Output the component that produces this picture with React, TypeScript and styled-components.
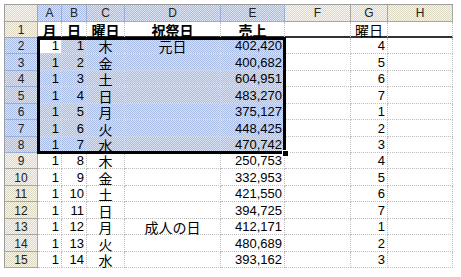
import React from "react";
import styled, { createGlobalStyle, css } from "styled-components";

const GlobalStyle = createGlobalStyle`
  html, body { margin: 0; padding: 0; background: #ffffff; }
  body { font-family: "Liberation Sans", "Noto Sans CJK JP", sans-serif; }
`;

const checker = (a: string, b: string) => css`
  background: repeating-conic-gradient(${a} 0% 25%, ${b} 0% 50%) 0 0 / 2px 2px;
`;

const Page = styled.div`
  padding: 4px 0 0 4px;
`;

const Sheet = styled.div`
  position: relative;
  display: grid;
  width: fit-content;
  grid-template-columns: 33px 24px 25px 38px 96px 64px 66px 37px 65px;
  grid-template-rows: 17px 16px repeat(2, 16px 17px 16px 17px 16px 17px 16px);
  border-top: 1px solid #9c9c9c;
  border-left: 1px solid #9c9c9c;
  font-family: "Liberation Sans", "Noto Sans CJK JP", sans-serif;
`;

const HeaderBase = styled.div<{ $selected?: boolean }>`
  box-sizing: border-box;
  display: flex;
  align-items: center;
  justify-content: center;
  font-size: 12px;
  color: #222;
  line-height: 1;
  border-right: 1px solid ${(p) => (p.$selected ? "#98aedb" : "#aaa79a")};
  border-bottom: 1px solid ${(p) => (p.$selected ? "#98aedb" : "#aaa79a")};
  ${(p) => (p.$selected ? checker("#a9bce5", "#dbe3f5") : checker("#dcd7c2", "#f8f6ee"))}
`;

const Corner = styled(HeaderBase)``;
const ColHeader = styled(HeaderBase)``;
const RowHeader = styled(HeaderBase)`
  padding-top: 1px;
`;

const Cell = styled.div<{
  $selected?: boolean;
  $active?: boolean;
  $align?: "left" | "center" | "right";
  $bold?: boolean;
  $titleRow?: boolean;
  $jp?: boolean;
}>`
  box-sizing: border-box;
  display: flex;
  align-items: center;
  justify-content: ${(p) =>
    p.$align === "right" ? "flex-end" : p.$align === "center" ? "center" : "flex-start"};
  padding: ${(p) => (p.$jp ? "3px 2px 0 2px" : "0 2px")};
  font-size: ${(p) => (p.$jp ? "14px" : "13px")};
  line-height: 1;
  color: #000;
  white-space: nowrap;
  font-weight: ${(p) => (p.$bold ? 700 : 400)};
  border-right: 1px ${(p) => (p.$selected ? "solid #c8d3ee" : "dotted #bdbdbd")};
  border-bottom: ${(p) =>
    p.$titleRow ? "2px solid #333" : p.$selected ? "1px solid #c8d3ee" : "1px dotted #bdbdbd"};
  ${(p) =>
    p.$active
      ? css`background: #ffffff;`
      : p.$selected
      ? checker("#a9bce5", "#d9e2f5")
      : css`background: #ffffff;`}
`;

const Selection = styled.div`
  position: absolute;
  left: 32px;
  top: 32px;
  width: 249px;
  height: 117px;
  box-sizing: border-box;
  border: 3px solid #000;
  pointer-events: none;
`;

const Handle = styled.div`
  position: absolute;
  left: 278px;
  top: 146px;
  width: 5px;
  height: 5px;
  background: #000;
  box-shadow: 0 0 0 1px #fff;
  pointer-events: none;
`;

const columns = ["A", "B", "C", "D", "E", "F", "G", "H"];
const selectedCols = new Set(["A", "B", "C", "D", "E"]);

type Row = [string, string, string, string, string, string];

const data: Row[] = [
  ["1", "1", "木", "元日", "402,420", "4"],
  ["1", "2", "金", "", "400,682", "5"],
  ["1", "3", "土", "", "604,951", "6"],
  ["1", "4", "日", "", "483,270", "7"],
  ["1", "5", "月", "", "375,127", "1"],
  ["1", "6", "火", "", "448,425", "2"],
  ["1", "7", "水", "", "470,742", "3"],
  ["1", "8", "木", "", "250,753", "4"],
  ["1", "9", "金", "", "332,953", "5"],
  ["1", "10", "土", "", "421,550", "6"],
  ["1", "11", "日", "", "394,725", "7"],
  ["1", "12", "月", "成人の日", "412,171", "1"],
  ["1", "13", "火", "", "480,689", "2"],
  ["1", "14", "水", "", "393,162", "3"],
];

export default function App() {
  return (
    <>
      <GlobalStyle />
      <Page>
        <Sheet>
          <Corner />
          {columns.map((c) => (
            <ColHeader key={c} $selected={selectedCols.has(c)}>
              {c}
            </ColHeader>
          ))}

          <RowHeader>1</RowHeader>
          <Cell $jp $align="center" $bold $titleRow>月</Cell>
          <Cell $jp $align="center" $bold $titleRow>日</Cell>
          <Cell $jp $align="center" $bold $titleRow>曜日</Cell>
          <Cell $jp $align="center" $bold $titleRow>祝祭日</Cell>
          <Cell $jp $align="center" $bold $titleRow>売上</Cell>
          <Cell $titleRow />
          <Cell $jp $align="center" $titleRow>曜日</Cell>
          <Cell $titleRow />

          {data.map((r, i) => {
            const rowNo = i + 2;
            const sel = rowNo >= 2 && rowNo <= 8;
            return (
              <React.Fragment key={rowNo}>
                <RowHeader $selected={sel}>{rowNo}</RowHeader>
                <Cell $align="right" $selected={sel} $active={rowNo === 2}>{r[0]}</Cell>
                <Cell $align="right" $selected={sel}>{r[1]}</Cell>
                <Cell $jp $align="center" $selected={sel}>{r[2]}</Cell>
                <Cell $jp $align="center" $selected={sel}>{r[3]}</Cell>
                <Cell $align="right" $selected={sel}>{r[4]}</Cell>
                <Cell />
                <Cell $align="right">{r[5]}</Cell>
                <Cell />
              </React.Fragment>
            );
          })}
          <Selection />
          <Handle />
        </Sheet>
      </Page>
    </>
  );
}
